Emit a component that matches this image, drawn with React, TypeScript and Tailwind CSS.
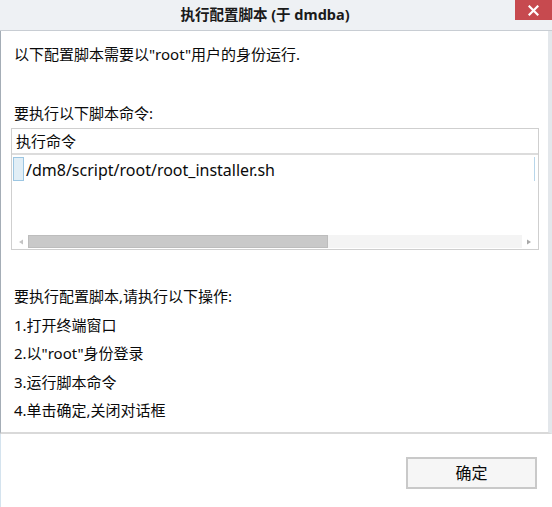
import React from "react";

const font = { fontFamily: '"Noto Sans", "Noto Sans CJK SC", sans-serif' };

export default function App() {
  return (
    <div
      className="w-[552px] h-[507px] bg-white flex flex-col text-[#0a0a0a] overflow-hidden"
      style={font}
    >
      {/* Title bar */}
      <div className="relative h-[31px] shrink-0 bg-[#eef1f4] border-b border-[#c8cdd3] flex items-center justify-center pr-[22px]">
        <span className="text-[14.5px] font-bold text-[#1a1a1a] leading-none pb-[1px]">
          执行配置脚本 (于 dmdba)
        </span>
        <div className="absolute right-0 top-0 w-[37px] h-[20px] bg-[#c74a4f] flex items-center justify-center">
          <svg width="11" height="11" viewBox="0 0 11 11">
            <path d="M1.5 1.5 L9.5 9.5 M9.5 1.5 L1.5 9.5" stroke="#fff" strokeWidth="2.2" strokeLinecap="square" />
          </svg>
        </div>
      </div>

      {/* Main panel */}
      <div className="h-[403px] shrink-0 border-l border-r-[4px] border-l-[#a4adb6] border-r-[#e3e7eb] border-b-2 border-b-[#d9d9d9] flex flex-col px-[12px] pt-[10px] text-[15px]">
        <div className="h-[26px] leading-[26px] pl-[1px]">以下配置脚本需要以"root"用户的身份运行.</div>
        <div className="mt-[33px] h-[26px] leading-[26px] pl-[1px]">要执行以下脚本命令:</div>

        {/* table */}
        <div className="mt-[2px] ml-[-2px] mr-[-3px] h-[122px] border border-[#cfcfcf] flex flex-col bg-white">
          <div className="h-[26px] border-b-2 border-[#dcdcdc] flex items-center pl-[4px] text-[15px]">
            执行命令
          </div>
          <div className="flex-1 flex flex-col">
            <div className="mt-[2px] h-[24px] flex items-center relative">
              <div className="ml-[1px] w-[11px] h-[24px] bg-[#e1eef6] border border-[#9cc6e2]" />
              <span className="ml-[2px] text-[16px] leading-[24px] pt-[2px] text-[#0a0a0a]">/dm8/script/root/root_installer.sh</span>
              <div className="absolute right-[3px] top-0 h-[24px] w-px bg-[#b8d6ea]" />
            </div>
            <div className="flex-1" />
            <div className="h-[13px] mb-[1px] flex items-center px-[2px]">
              <div className="w-[14px] h-[13px] flex items-center justify-center">
                <svg width="6" height="6" viewBox="0 0 6 6"><path d="M5 0.5 L1 3 L5 5.5 Z" fill="#c4c4c4" /></svg>
              </div>
              <div className="flex-1 h-[13px] bg-[#f4f4f4] flex">
                <div className="w-[300px] h-[13px] bg-[#c9c9c9] border border-[#bdbdbd]" />
              </div>
              <div className="w-[14px] h-[13px] flex items-center justify-center">
                <svg width="6" height="6" viewBox="0 0 6 6"><path d="M1 0.5 L5 3 L1 5.5 Z" fill="#a8a8a8" /></svg>
              </div>
            </div>
          </div>
        </div>

        <div className="mt-[32px] flex flex-col pl-[1px]">
          <div className="h-[28.5px] leading-[28px]">要执行配置脚本,请执行以下操作:</div>
          <div className="h-[28.5px] leading-[28px]">1.打开终端窗口</div>
          <div className="h-[28.5px] leading-[28px]">2.以"root"身份登录</div>
          <div className="h-[28.5px] leading-[28px]">3.运行脚本命令</div>
          <div className="h-[28.5px] leading-[28px]">4.单击确定,关闭对话框</div>
        </div>
      </div>

      {/* Footer */}
      <div className="flex-1 border-l border-l-[#d4e3ee] flex justify-end items-start pt-[23px] pr-[15px]">
        <button className="w-[131px] h-[32px] bg-[#f6f6f6] border-2 border-[#c9c9c9] flex items-center justify-center text-[16px] text-[#0a0a0a]">
          确定
        </button>
      </div>
    </div>
  );
}
